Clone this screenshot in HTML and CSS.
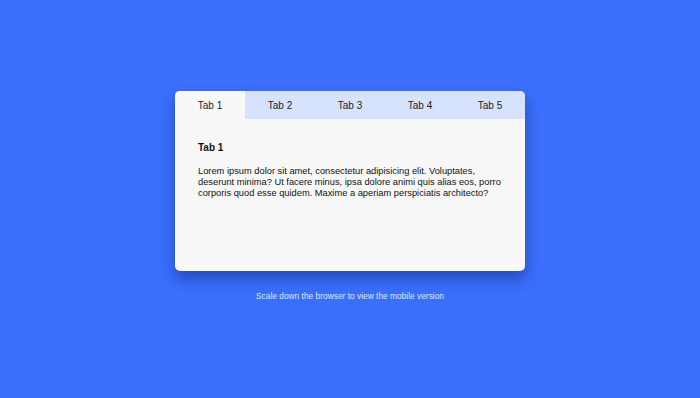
FILE: index.html
```html
<!DOCTYPE html>
<html lang="en">
<head>
    <meta charset="UTF-8">
    <meta name="viewport" content="width=device-width, initial-scale=1.0">
    <title>Tabs</title>
    <link rel="stylesheet" href="styles.css">
</head>
<body>
    <div class="wrapper">
        <div class="tabs">
            <div class="tab-list">
                <button class="tab active">Tab 1</button>
                <button class="tab">Tab 2</button>
                <button class="tab">Tab 3</button>
                <button class="tab">Tab 4</button>
                <button class="tab">Tab 5</button>
            </div>
            <div class="tab-content">
                <h3>Tab 1</h3>
                <p>Lorem ipsum dolor sit amet, consectetur adipisicing elit. Voluptates, deserunt minima? Ut facere minus, ipsa dolore animi quis alias eos, porro corporis quod esse quidem. Maxime a aperiam perspiciatis architecto?</p>
            </div>
        </div>
        <p class="note">Scale down the browser to view the mobile version</p>
    </div>
</body>
</html>
```

FILE: styles.css
```css
* { margin: 0; padding: 0; box-sizing: border-box; }
body {
    font-family: "Liberation Sans", Arial, sans-serif;
    background: #3a6ffb;
    min-height: 100vh;
}
.wrapper {
    display: flex;
    flex-direction: column;
    align-items: center;
    padding-top: 91px;
}
.tabs {
    width: 350px;
    height: 180px;
    background: #f8f8f8;
    border-radius: 5px;
    overflow: hidden;
    box-shadow: 0 8px 14px rgba(10, 30, 110, 0.45);
}
.tab-list { display: flex; background: #d7e3fc; }
.tab {
    flex: 1;
    height: 28px;
    border: none;
    background: transparent;
    font-family: inherit;
    font-size: 10px;
    color: #222;
}
.tab.active { background: #f8f8f8; }
.tab-content { padding: 23px 18px 23px 23px; color: #111; }
.tab-content h3 { font-size: 10px; margin-bottom: 13px; }
.tab-content p { font-size: 9.3px; line-height: 11px; }
.note {
    margin-top: 20px;
    font-size: 8.4px;
    color: #dde6ff;
}
```
